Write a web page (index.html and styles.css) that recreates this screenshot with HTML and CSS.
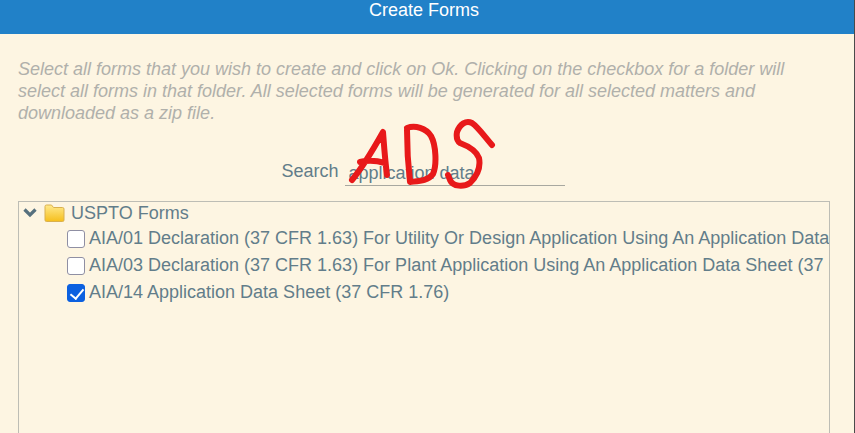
FILE: index.html
```html
<!DOCTYPE html>
<html lang="en">
<head>
<meta charset="utf-8">
<title>Create Forms</title>
<link rel="stylesheet" href="styles.css">
</head>
<body>
<div class="dialog">
  <header class="title">Create Forms</header>
  <div class="body">
    <p class="hint">Select all forms that you wish to create and click on Ok. Clicking on the checkbox for a folder will select all forms in that folder. All selected forms will be generated for all selected matters and downloaded as a zip file.</p>
    <div class="search">
      <label class="search-label" for="q">Search</label>
      <input class="search-input" id="q" type="text" value="application data">
    </div>
    <div class="tree">
      <div class="folder">
        <svg class="chev" width="14" height="10" viewBox="0 0 14 10"><path d="M1.5 1.5 L7 7 L12.5 1.5" fill="none" stroke="#56707e" stroke-width="3.2"/></svg>
        <svg class="folder-icon" width="21" height="19" viewBox="0 0 21 19"><defs><linearGradient id="fg" x1="0" y1="0" x2="0" y2="1"><stop offset="0" stop-color="#ffe98c"/><stop offset="1" stop-color="#f6bf1c"/></linearGradient></defs><path d="M1 2.5 Q1 1 2.5 1 H7.5 L9.5 3.5 H18.5 Q20 3.5 20 5 V16 Q20 17.5 18.5 17.5 H2.5 Q1 17.5 1 16 Z" fill="url(#fg)" stroke="#d9b04e" stroke-width="1"/></svg>
        <span>USPTO Forms</span>
      </div>
      <label class="item"><input class="check" type="checkbox"><span class="name">AIA/01 Declaration (37 CFR 1.63) For Utility Or Design Application Using An Application Data Sheet (37 CFR 1.76)</span></label>
      <label class="item"><input class="check" type="checkbox"><span class="name">AIA/03 Declaration (37 CFR 1.63) For Plant Application Using An Application Data Sheet (37 CFR 1.76)</span></label>
      <label class="item"><input class="check" type="checkbox" checked><span class="name">AIA/14 Application Data Sheet (37 CFR 1.76)</span></label>
    </div>
  </div>
</div>
<svg class="scribble" width="855" height="433" viewBox="0 0 855 433"><path d="M352 180 C362 168 374 148 383 132 C384 145 385 160 387 175 M360 162 C368 160 378 161 385 163 M407 130 C407 148 408 165 410 182 C418 181 428 181 433 174 C437 165 436 145 431 136 C426 128 415 125 407 128 M492 145 C485 137 478 127 472 123 C466 120 460 124 457 132 C456 138 457 141 460 143 C468 146 476 150 479 158 C481 168 477 176 470 183 C464 187 453 187 450 180 L448 175" fill="none" stroke="#e8191a" stroke-width="6" stroke-linecap="round" stroke-linejoin="round"/></svg>
</body>
</html>
```

FILE: styles.css
```css
* { box-sizing: border-box; }
html, body { margin: 0; height: 100%; }
body {
  background: #fdf5e2;
  overflow: hidden;
  font-family: "Liberation Sans", Arial, sans-serif;
  color: #627d8a;
  border-right: 1px solid #4a4a4a;
}
.dialog { height: 433px; display: flex; flex-direction: column; overflow: hidden; }
.title {
  flex: none;
  height: 34px;
  background: #2181c8;
  color: #fff;
  font-size: 18px;
  line-height: 20px;
  text-align: center;
  padding-right: 6px;
}
.body { flex: 1; min-height: 0; padding: 24px 24px 0 18px; }
.hint {
  margin: 0;
  font-size: 18px;
  line-height: 22px;
  font-style: italic;
  color: #b0b0ab;
}
.search {
  display: flex;
  justify-content: center;
  align-items: flex-end;
  gap: 6px;
  margin: 38px 0 15px;
  height: 24px;
  padding-right: 2px;
}
.search-label { font-size: 18px; line-height: 22px; padding-bottom: 4px; }
.search-input {
  width: 220px;
  height: 24px;
  padding: 0 4px;
  border: 0;
  border-bottom: 1px solid #a8a8a0;
  background: transparent;
  font: 18px "Liberation Sans", Arial, sans-serif;
  color: #627d8a;
  outline: none;
}
.tree {
  height: 232px;
  border: 1px solid #bdbdb5;
  border-bottom: 0;
  width: 812px;
  overflow: hidden;
  font-size: 18px;
}
.folder { display: flex; align-items: center; height: 22px; margin-bottom: 1px; padding-left: 4px; }
.chev { margin-right: 7px; }
.folder-icon { margin-right: 6px; }
.item {
  display: flex;
  align-items: center;
  height: 27px;
  padding-left: 48px;
  white-space: nowrap;
}
.check {
  appearance: none;
  position: relative;
  width: 18px;
  height: 18px;
  margin: 0 4px 0 0;
  flex: none;
  background: #fff;
  border: 1px solid #8f8fa3;
  border-radius: 3px;
}
.check:checked { background: #0b60e0; border-color: #0b60e0; }
.check:checked::after {
  content: "";
  position: absolute;
  left: 5px;
  top: 1.5px;
  width: 6px;
  height: 11px;
  border: solid #fff;
  border-width: 0 2.5px 2.5px 0;
  transform: rotate(40deg);
}
.scribble { position: absolute; left: 0; top: 0; pointer-events: none; }
```
